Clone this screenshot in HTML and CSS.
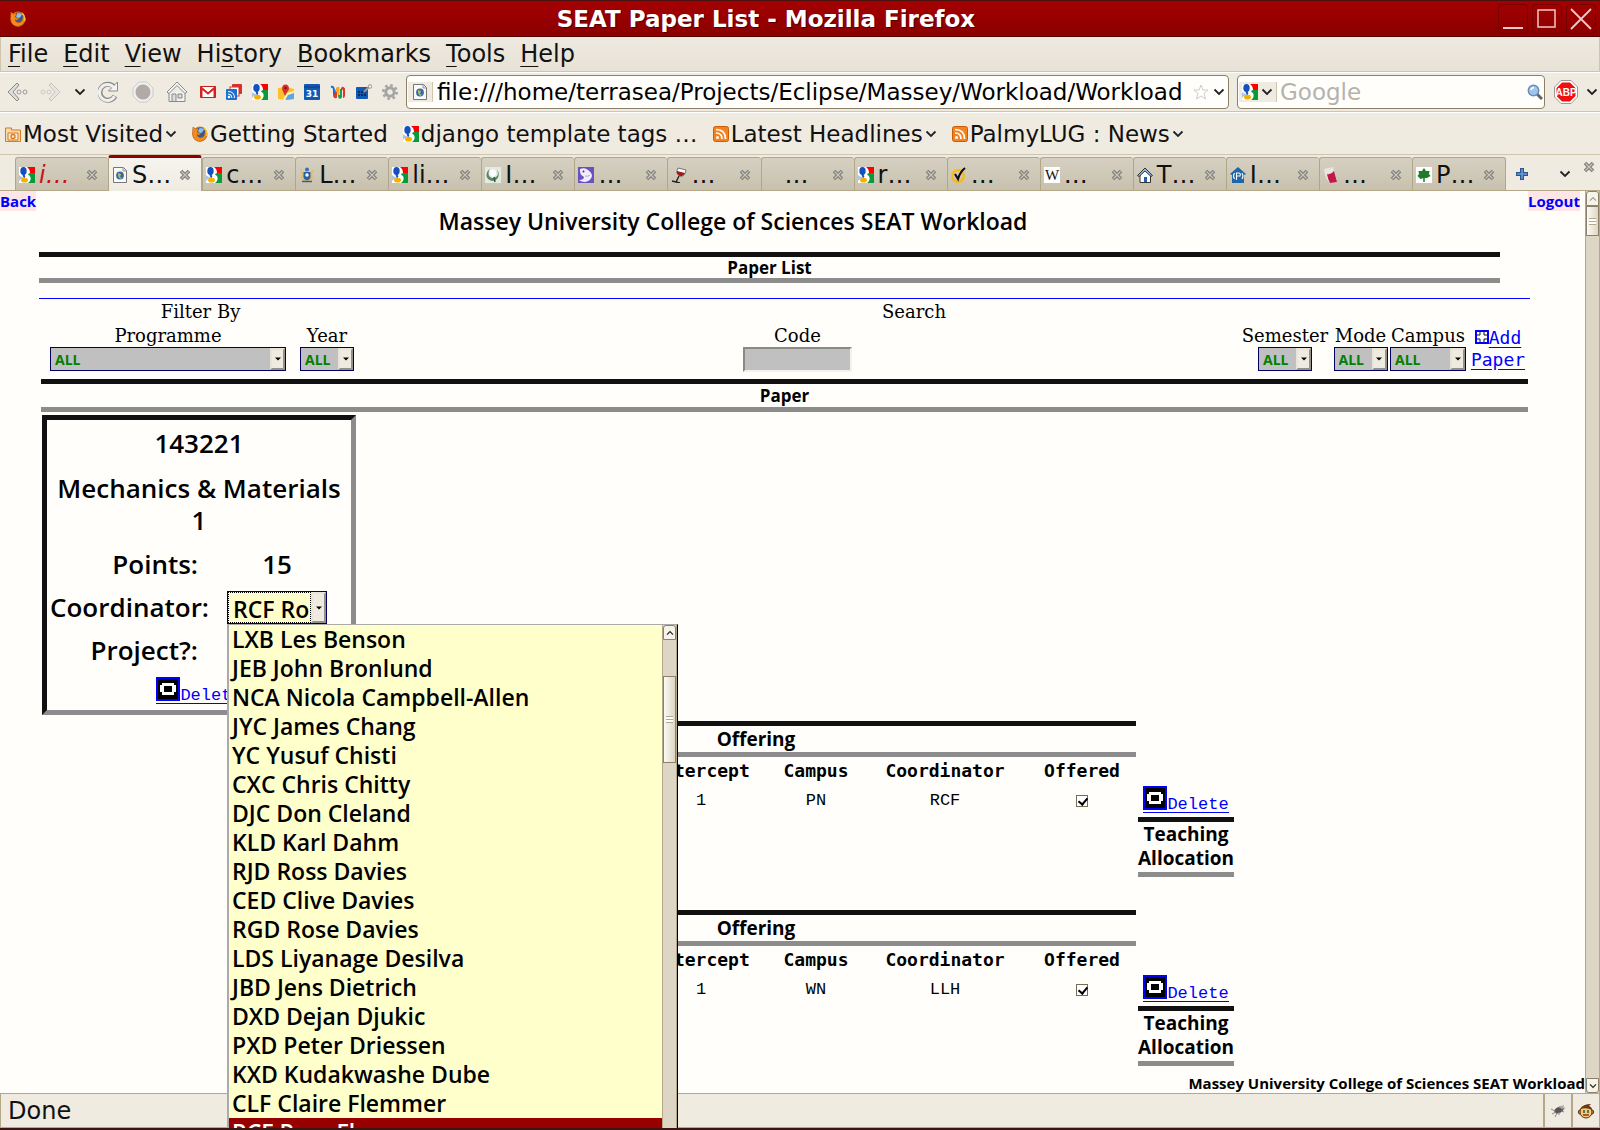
FILE: index.html
```html
<!DOCTYPE html>
<html lang="en">
<head>
<meta charset="utf-8">
<title>SEAT Paper List - Mozilla Firefox</title>
<link rel="stylesheet" href="styles.css">
</head>
<body>
<svg class="defs" aria-hidden="true">
  <symbol id="firefox" viewBox="0 0 16 16">
    <circle cx="8" cy="8" r="7.500" fill="#e8761a"/>
    <circle cx="8.500" cy="6.500" r="5" fill="#2c5a9c"/><path d="M7 2.500q3-1.500 5 1l-2 3-2 1-2-2z" fill="#8cc0ea"/>
    <path d="M1 1l2.500 2q2-1 3 .5L5 6l2 1 2 .5q-2 3-4 1 1 4 5 3 3-1 3-7 2.500 3 1.500 6Q13 15 8 15.500 1 15 .5 8 .5 4 1 1z" fill="#f28c1c" stroke="#a84a10" stroke-width=".5"/>
    <path d="M12 2q3.500 3 2.500 8" fill="none" stroke="#f9c22b" stroke-width="1.600"/>
  </symbol>
  <symbol id="google" viewBox="0 0 16 16">
    <path d="M0 0h16v16H0z" fill="#fff"/><path d="M8 0h8v6H11q0-4-3-6z" fill="#f00"/><path d="M11 6h5v10H9q4-3 2-7-2-1-2-2z" fill="#0a9a3c"/>
    <ellipse cx="4.500" cy="4" rx="3.200" ry="4" fill="#1450c0"/><path d="M0 8q3 3 6 2v1q-4 0-6 3z" fill="#1450c0" opacity=".35"/><path d="M5 7q-1 2 1 3" stroke="#1450c0" stroke-width="2" fill="none"/><ellipse cx="5.500" cy="13.200" rx="3.400" ry="2.400" fill="#f5b000"/>
  </symbol>
  <symbol id="page" viewBox="0 0 16 16">
    <path d="M1.500.5h10l3 3v12h-13z" fill="#fafafa" stroke="#777"/><path d="M11 .5V4h3" fill="#ddd" stroke="#999"/>
    <circle cx="8" cy="8.500" r="3.900" fill="#3a67a8"/><path d="M6 6l3 1-1 3 2 1-2 1-2-3z" fill="#a8c060"/>
  </symbol>
  <symbol id="chev" viewBox="0 0 12 8"><path d="M1.500 1.500L6 6l4.500-4.500" fill="none" stroke="#222" stroke-width="1.800"/></symbol>
  <symbol id="down" viewBox="0 0 6 4"><path d="M0 .5h6L3 3.500z" fill="#000"/></symbol>
  <symbol id="close" viewBox="0 0 12 12"><path d="M2 2l8 8M10 2l-8 8" stroke="#7c7c76" stroke-width="3.600"/><path d="M2.500 2.500l7 7M9.500 2.500l-7 7" stroke="#c8c6bc" stroke-width="1.300"/></symbol>
  <symbol id="rss" viewBox="0 0 16 16"><rect x=".5" y=".5" width="15" height="15" rx="2" fill="#f58220" stroke="#c95e0a"/><circle cx="4.500" cy="11.500" r="1.500" fill="#fff"/><path d="M3 7q6 0 6 6M3 3.500q9.500 0 9.500 9.500" fill="none" stroke="#fff" stroke-width="1.700"/></symbol>
  <symbol id="del" viewBox="0 0 24 24"><path d="M0 0h24v24H0z" fill="#00f"/><path d="M2 2h20v20H2z" fill="#000"/><path d="M6 6h12v2h2v7h-2v3H6v-3H4V8h2z" fill="#fff"/><path d="M8 9h8v6H8z" fill="#000"/></symbol>
</svg>

<header class="titlebar">
  <svg class="ico"><use href="#firefox"/></svg>
  <h1 class="window-title">SEAT Paper List - Mozilla Firefox</h1>
  <div class="window-buttons">
    <button aria-label="Minimise"><svg viewBox="0 0 20 20"><path d="M0 19h20" stroke="#f0c8c8" stroke-width="2"/></svg></button>
    <button aria-label="Maximise"><svg viewBox="0 0 20 20"><path d="M1 1h17v17H1z" fill="none" stroke="#f0c8c8" stroke-width="1.500"/></svg></button>
    <button aria-label="Close"><svg viewBox="0 0 20 20"><path d="M0 0l20 20M20 0L0 20" stroke="#f0c8c8" stroke-width="1.800"/></svg></button>
  </div>
</header>

<nav class="menubar">
  <button><u>F</u>ile</button><button><u>E</u>dit</button><button><u>V</u>iew</button><button>Hi<u>s</u>tory</button><button><u>B</u>ookmarks</button><button><u>T</u>ools</button><button><u>H</u>elp</button>
</nav>

<div class="navbar">
  <button class="nb" aria-label="Back"><svg viewBox="0 0 22 22"><path d="M11 2L2 11l9 9 2-2-6-7 6-7z" fill="#ddd" stroke="#888"/><circle cx="13" cy="11" r="2" fill="#eee" stroke="#999"/><circle cx="19" cy="11" r="2" fill="#eee" stroke="#999"/></svg></button>
  <button class="nb faint" aria-label="Forward"><svg viewBox="0 0 22 22"><path d="M11 2l9 9-9 9-2-2 6-7-6-7z" fill="#ddd" stroke="#888"/><circle cx="9" cy="11" r="2" fill="#eee" stroke="#999"/><circle cx="3" cy="11" r="2" fill="#eee" stroke="#999"/></svg></button>
  <button class="nb slim" aria-label="History list"><svg class="chev"><use href="#chev"/></svg></button>
  <button class="nb" aria-label="Reload"><svg viewBox="0 0 22 22"><path d="M17 15a8 8 0 1 1-1-9" fill="none" stroke="#8a8a88" stroke-width="5"/><path d="M19.500 1v9h-9z" fill="#f4f4f2" stroke="#8a8a88"/><path d="M16.500 15.300a8 8 0 1 1-1-9" fill="none" stroke="#f0f0ee" stroke-width="3"/></svg></button>
  <button class="nb" aria-label="Stop"><svg viewBox="0 0 22 22"><path d="M7 1h8l6 6v8l-6 6H7l-6-6V7z" fill="#eee" stroke="#ccc"/><circle cx="11" cy="11" r="7.500" fill="#b3aaa8"/></svg></button>
  <button class="nb" aria-label="Home"><svg viewBox="0 0 22 22"><path d="M3 11v9.500h16V11" fill="#f2f2f0" stroke="#888"/><path d="M11 1L1 11l2 1.500 8-8 8 8 2-1.500z" fill="#f4f4f2" stroke="#888"/><path d="M6 20v-7h4v7M12 13h4v4h-4z" fill="#ddd" stroke="#888"/></svg></button>
  <div class="favs">
    <a href="#gmail" aria-label="Mail"><svg viewBox="0 0 16 16"><path d="M.5 2.500h15v11H.5z" fill="#fff" stroke="#c8201c"/><path d="M1.500 13.500V4L8 9.500 14.500 4v9.500" fill="none" stroke="#d8251f" stroke-width="2"/></svg></a>
    <a href="#reader" aria-label="Reader"><svg viewBox="0 0 16 16"><rect x="6" y="0" width="10" height="10" rx="1" fill="#d8302a"/><rect x="4" y="3" width="9" height="9" fill="#fff" stroke="#d8302a"/><rect x="0" y="5" width="11" height="11" rx="1" fill="#1d6fd0"/><circle cx="3" cy="13" r="1.300" fill="#fff"/><path d="M2 10q4 0 4 4M2 7.500q6.500 0 6.500 6.500" stroke="#fff" fill="none"/></svg></a>
    <a href="#google" aria-label="Search"><svg><use href="#google"/></svg></a>
    <a href="#maps" aria-label="Maps"><svg viewBox="0 0 16 16"><path d="M0 4l8-1 8 2v10l-8 1-8-1z" fill="#fbc02d"/><path d="M7 10l9-2v7l-8 1z" fill="#5aa5ea"/><path d="M5 16l3-7 8-2v2l-6 2-3 5z" fill="#fff3b0"/><path d="M7 12L4 5q0-4.500 3.500-4.500T11 5z" fill="#d8302a"/><circle cx="7.500" cy="4" r="1.200" fill="#701010"/></svg></a>
    <a href="#calendar" aria-label="Calendar"><svg viewBox="0 0 16 16"><rect width="16" height="16" rx="1" fill="#1259b5"/><path d="M0 3h16" stroke="#0b3d84"/><text x="8" y="13" class="cal">31</text></svg></a>
    <a href="#wave" aria-label="Wave"><svg viewBox="0 0 16 16"><g fill="none" stroke-width="2"><path d="M1 3q3-1 3 4v4" stroke="#1f6ad0"/><path d="M4 10q0 4 2 3V6" stroke="#e0342c"/><path d="M6.500 8q0-5 2-4v7" stroke="#f6a81c"/><path d="M9 11q0 4 2 2V5" stroke="#16a050"/><path d="M11.500 6q1-4 2.500-1v6q0 2-1 2" stroke="#e0342c"/></g></svg></a>
    <a href="#tasks" aria-label="Tasks"><svg viewBox="0 0 16 16"><rect x="0" y="3" width="12" height="12" rx="1" fill="#1259b5"/><path d="M2 8h2m1 0h2m1 0h2M2 11h2m1 0h2m1 0h2" stroke="#052c66" stroke-width="2"/><path d="M8 8l5-5" stroke="#999" stroke-width="2"/><circle cx="14" cy="2.500" r="1.800" fill="#eee" stroke="#777" stroke-width=".7"/></svg></a>
    <a href="#gear" aria-label="Settings"><svg viewBox="0 0 16 16"><circle cx="8" cy="8" r="6.700" fill="none" stroke="#a4a4a4" stroke-width="2.600" stroke-dasharray="2.600 2.660"/><circle cx="8" cy="8" r="4.200" fill="none" stroke="#a4a4a4" stroke-width="3"/></svg></a>
  </div>
  <div class="field url">
    <span class="id"><svg class="ico"><use href="#page"/></svg></span>
    <input type="text" aria-label="Location" value="file:///home/terrasea/Projects/Eclipse/Massey/Workload/Workload">
    <svg class="ico" viewBox="0 0 16 16"><path d="M8 1l2 5h5l-4 3.500 1.500 5.500L8 12l-4.500 3L5 9.500 1 6h5z" fill="#fff" stroke="#ccc"/></svg>
    <svg class="chev"><use href="#chev"/></svg>
  </div>
  <div class="field find">
    <span class="id engine"><svg class="ico"><use href="#google"/></svg><svg class="chev"><use href="#chev"/></svg></span>
    <input type="text" aria-label="Search the web" placeholder="Google">
    <svg class="ico" viewBox="0 0 16 16"><path d="M10 10l5 5" stroke="#666" stroke-width="3"/><circle cx="6.500" cy="6.500" r="5.200" fill="#9cc6f0" stroke="#6c8cb0" stroke-width="1.500"/><path d="M4 6q0-2 3-2.500" stroke="#fff" stroke-width="1.500" fill="none"/></svg>
  </div>
  <button class="abp" aria-label="Adblock"><svg viewBox="0 0 24 24"><path d="M7 .5h10L23.500 7v10L17 23.500H7L.5 17V7z" fill="#fff" stroke="#999"/><path d="M8 2.500h8L21.500 8v8L16 21.500H8L2.500 16V8z" fill="#f01010"/><text x="12" y="16" class="abp-text">ABP</text></svg></button>
  <svg class="chev"><use href="#chev"/></svg>
</div>

<div class="bookmarks">
  <a href="#most"><svg class="ico" viewBox="0 0 16 16"><path d="M.5 2h6v2h9v11.500H.5z" fill="#f7d9b4" stroke="#d67a1c"/><path d="M3 7h10v7H3z" fill="#fbe9d0" stroke="#d67a1c"/><circle cx="8" cy="10.500" r="2" fill="none" stroke="#d67a1c" stroke-width="1.300"/></svg>Most Visited<svg class="chev small"><use href="#chev"/></svg></a>
  <a href="#started"><svg class="ico"><use href="#firefox"/></svg>Getting Started</a>
  <a href="#django"><svg class="ico"><use href="#google"/></svg>django template tags …</a>
  <a href="#headlines"><svg class="ico"><use href="#rss"/></svg>Latest Headlines<svg class="chev small"><use href="#chev"/></svg></a>
  <a href="#palmy"><svg class="ico"><use href="#rss"/></svg>PalmyLUG : News<svg class="chev small"><use href="#chev"/></svg></a>
</div>

<div class="tabs">
  <div class="tab unread"><svg class="ico"><use href="#google"/></svg><button class="label">i…</button><button class="x" aria-label="Close tab"><svg><use href="#close"/></svg></button></div>
  <div class="tab active"><svg class="ico"><use href="#page"/></svg><button class="label">S…</button><button class="x" aria-label="Close tab"><svg><use href="#close"/></svg></button></div>
  <div class="tab"><svg class="ico"><use href="#google"/></svg><button class="label">c…</button><button class="x" aria-label="Close tab"><svg><use href="#close"/></svg></button></div>
  <div class="tab"><svg class="ico" viewBox="0 0 16 16"><path d="M1 2q3 6 1 9 3 4 6 4t6-4q-2-3 1-9-3 1-3 5H4Q4 3 1 2z" fill="#e8b860"/><circle cx="8" cy="2.500" r="2" fill="#3a70b0"/><path d="M4.500 5h7v5q0 2-3.500 3.500Q4.500 12 4.500 10z" fill="#2a62a8"/><circle cx="8" cy="8" r="1.700" fill="#fff"/><path d="M3 14.500h10" stroke="#2a62a8" stroke-width="1.500"/></svg><button class="label">L…</button><button class="x" aria-label="Close tab"><svg><use href="#close"/></svg></button></div>
  <div class="tab"><svg class="ico"><use href="#google"/></svg><button class="label">li…</button><button class="x" aria-label="Close tab"><svg><use href="#close"/></svg></button></div>
  <div class="tab"><svg class="ico" viewBox="0 0 16 16"><path d="M0 0h16v16H0z" fill="#e4ebe0"/><path d="M5 1.500Q-1 7 3 12q5 4 9 0 4-5-1-10.500Q15 7 11 10q-3 2-6 0-3-3 0-8.500z" fill="#5f8567"/><path d="M5 3q-2 5 3 7 5-2 2-7-2-1-5 0z" fill="#fff"/><path d="M9 10l1 5" stroke="#345a40" stroke-width="1.500"/></svg><button class="label">I…</button><button class="x" aria-label="Close tab"><svg><use href="#close"/></svg></button></div>
  <div class="tab"><svg class="ico" viewBox="0 0 16 16"><path d="M0 0h16v16H0z" fill="#6a50c0"/><path d="M2 2q5-2 8 1 4 3 4 6-1 5-7 6-4 0-6-2 5 0 5-3-5-3-4-8z" fill="#f0edff"/><circle cx="5.500" cy="4.500" r="1" fill="#432a90"/><path d="M7 9q3 1 5-1" stroke="#b0a0e8" fill="none"/></svg><button class="label">…</button><button class="x" aria-label="Close tab"><svg><use href="#close"/></svg></button></div>
  <div class="tab"><svg class="ico" viewBox="0 0 16 16"><path d="M7 1l8 2q-1 7-6 6Q4 7 7 1z" fill="#fff" stroke="#444" stroke-width=".7"/><path d="M6 4l8 2q-2 4-5 3-4-2-3-5z" fill="#a01818"/><path d="M8 9l-3 6M1 14l8 2" stroke="#222" stroke-width="1.400"/></svg><button class="label">…</button><button class="x" aria-label="Close tab"><svg><use href="#close"/></svg></button></div>
  <div class="tab"><span class="ico"></span><button class="label">…</button><button class="x" aria-label="Close tab"><svg><use href="#close"/></svg></button></div>
  <div class="tab"><svg class="ico"><use href="#google"/></svg><button class="label">r…</button><button class="x" aria-label="Close tab"><svg><use href="#close"/></svg></button></div>
  <div class="tab"><svg class="ico" viewBox="0 0 16 16"><circle cx="7" cy="9" r="5.800" fill="none" stroke="#fdb813" stroke-width="2.200"/><path d="M4 7l3 5q2-7 7-11" fill="none" stroke="#111" stroke-width="2.200"/></svg><button class="label">…</button><button class="x" aria-label="Close tab"><svg><use href="#close"/></svg></button></div>
  <div class="tab"><svg class="ico" viewBox="0 0 16 16"><path d="M0 0h16v16H0z" fill="#fff"/><text x="8" y="13" class="wiki">W</text></svg><button class="label">…</button><button class="x" aria-label="Close tab"><svg><use href="#close"/></svg></button></div>
  <div class="tab"><svg class="ico" viewBox="0 0 16 16"><path d="M3 8v7.500h10.500V8L8 3z" fill="#fff" stroke="#333"/><path d="M8 1L.5 8.500 2 9.500 8 4l6 5.500 1.500-1z" fill="#8cb8e8" stroke="#222" stroke-width=".9"/><path d="M7 10h3v5H7z" fill="#2860b0"/></svg><button class="label">T…</button><button class="x" aria-label="Close tab"><svg><use href="#close"/></svg></button></div>
  <div class="tab"><svg class="ico" viewBox="0 0 16 16"><path d="M8 0l8 7-2 1v8H2V8L0 7z" fill="#1f66a8"/><path d="M6.500 13V6H9q2 .5 1 3H7M4.500 6q-2 3 0 6M12 6q2 3 0 6" fill="none" stroke="#fff" stroke-width="1.100"/></svg><button class="label">I…</button><button class="x" aria-label="Close tab"><svg><use href="#close"/></svg></button></div>
  <div class="tab"><svg class="ico" viewBox="0 0 16 16"><path d="M1 2l9-2 4 15-7 1Q2 12 1 2z" fill="#e8e4e0"/><path d="M4 7q4 1 7-3l3 11-7 1q-2-3-3-9z" fill="#c01848"/></svg><button class="label">…</button><button class="x" aria-label="Close tab"><svg><use href="#close"/></svg></button></div>
  <div class="tab"><svg class="ico" viewBox="0 0 16 16"><path d="M0 0h16v16H0z" fill="#fff"/><path d="M8 1l2 3h3.500L13 7l1.500 2-3.500 2H8l-3.500 1L1.500 9 3 7l-.5-3H6z" fill="#1f7a2c"/><path d="M8 9v6" stroke="#1f7a2c" stroke-width="1.500"/></svg><button class="label">P…</button><button class="x" aria-label="Close tab"><svg><use href="#close"/></svg></button></div>
  <div class="tab-tools">
    <button aria-label="New tab"><svg class="plus" viewBox="0 0 12 12"><path d="M6 0v12M0 6h12" stroke="#2c5594" stroke-width="4"/><path d="M6 1v10M1 6h10" stroke="#6f9bd6" stroke-width="1.600"/></svg></button>
    <button aria-label="All tabs"><svg class="chev"><use href="#chev"/></svg></button>
    <button class="shut" aria-label="Close"><svg class="plus"><use href="#close"/></svg></button>
  </div>
</div>

<div class="viewport">
  <main class="page">
    <div class="toplinks"><a href="#back">Back</a><a href="#logout">Logout</a></div>
    <h2 class="page-title">Massey University College of Sciences SEAT Workload</h2>
    <div class="body">
      <h3 class="band first">Paper List</h3>
      <form class="filters">
        <fieldset class="group">
          <legend>Filter By</legend>
          <div class="row">
            <label class="prog">Programme<span class="select"><select><option>ALL</option></select><span class="drop"><svg><use href="#down"/></svg></span></span></label>
            <label class="year">Year<span class="select"><select><option>ALL</option></select><span class="drop"><svg><use href="#down"/></svg></span></span></label>
          </div>
        </fieldset>
        <fieldset class="group search">
          <legend>Search</legend>
          <div class="row">
            <label class="code">Code<input type="text"></label>
            <label class="sem">Semester<span class="select"><select><option>ALL</option></select><span class="drop"><svg><use href="#down"/></svg></span></span></label>
            <label class="mode">Mode<span class="select"><select><option>ALL</option></select><span class="drop"><svg><use href="#down"/></svg></span></span></label>
            <label class="campus">Campus<span class="select"><select><option>ALL</option></select><span class="drop"><svg><use href="#down"/></svg></span></span></label>
          </div>
        </fieldset>
        <a class="add" href="#add"><svg viewBox="0 0 14 14"><path d="M0 0h14v14H0z" fill="#00f"/><path d="M2 2h10v10H2z" fill="#fff"/><path d="M5 2v3H2M9 2v3h3M5 12V9H2M9 12V9h3" fill="none" stroke="#111"/></svg>Add Paper</a>
      </form>
      <h3 class="band">Paper</h3>

      <section class="card">
        <p class="num">143221</p>
        <p class="name">Mechanics &amp; Materials 1</p>
        <div class="pair"><span>Points:</span><span class="val">15</span></div>
        <div class="pair coord"><label for="coordinator">Coordinator:</label>
          <div class="select open">
            <select id="coordinator"><option>RCF Rory Flemmer</option></select><span class="drop"><svg><use href="#down"/></svg></span>
            <div class="popup">
              <ul role="listbox" aria-label="Coordinator">
                <li role="option">LXB Les Benson</li><li role="option">JEB John Bronlund</li><li role="option">NCA Nicola Campbell-Allen</li><li role="option">JYC James Chang</li><li role="option">YC Yusuf Chisti</li><li role="option">CXC Chris Chitty</li><li role="option">DJC Don Cleland</li><li role="option">KLD Karl Dahm</li><li role="option">RJD Ross Davies</li><li role="option">CED Clive Davies</li><li role="option">RGD Rose Davies</li><li role="option">LDS Liyanage Desilva</li><li role="option">JBD Jens Dietrich</li><li role="option">DXD Dejan Djukic</li><li role="option">PXD Peter Driessen</li><li role="option">KXD Kudakwashe Dube</li><li role="option">CLF Claire Flemmer</li><li role="option" aria-selected="true">RCF Rory Flemmer</li>
              </ul>
              <div class="scroll"><span class="sb-btn"><svg class="up"><use href="#chev"/></svg></span><span class="sb-thumb"><i></i></span></div>
            </div>
          </div>
        </div>
        <div class="pair"><span>Project?:</span></div>
        <a class="del" href="#delete"><svg><use href="#del"/></svg>Delete</a>
      </section>

      <section class="offer">
        <table>
          <caption class="band">Offering</caption>
          <colgroup><col class="c0"><col class="c1"><col class="c2"><col class="c3"><col class="c4"></colgroup>
          <thead><tr><td></td><th>Intercept</th><th>Campus</th><th>Coordinator</th><th>Offered</th></tr></thead>
          <tbody><tr><td></td><td>1</td><td>PN</td><td>RCF</td><td><input type="checkbox" aria-label="Offered" checked></td></tr></tbody>
        </table>
        <div class="teach"><a class="del" href="#delete"><svg><use href="#del"/></svg>Delete</a><h3 class="band">Teaching Allocation</h3></div>
      </section>
      <section class="offer">
        <table>
          <caption class="band">Offering</caption>
          <colgroup><col class="c0"><col class="c1"><col class="c2"><col class="c3"><col class="c4"></colgroup>
          <thead><tr><td></td><th>Intercept</th><th>Campus</th><th>Coordinator</th><th>Offered</th></tr></thead>
          <tbody><tr><td></td><td>1</td><td>WN</td><td>LLH</td><td><input type="checkbox" aria-label="Offered" checked></td></tr></tbody>
        </table>
        <div class="teach"><a class="del" href="#delete"><svg><use href="#del"/></svg>Delete</a><h3 class="band">Teaching Allocation</h3></div>
      </section>
    </div>
    <footer class="foot">Massey University College of Sciences SEAT Workload</footer>
  </main>
  <div class="scroll main-scroll"><span class="sb-btn"><svg class="up dim"><use href="#chev"/></svg></span><span class="sb-thumb"><i></i></span><span class="sb-btn end"><svg><use href="#chev"/></svg></span></div>
</div>

<div class="status">
  <span class="msg">Done</span>
  <span class="cell"><svg class="ico" viewBox="0 0 16 16"><ellipse cx="9" cy="7" rx="5" ry="3" fill="#555" transform="rotate(-25 9 7)"/><path d="M1 6l4 2M2 11l4-2M5 14l2-4M14 9l-3-1M15 5l-4 1M9 12l0-3" stroke="#888"/><path d="M8 4l6-2-1 4z" fill="#aaa"/></svg></span>
  <span class="cell"><svg class="ico" viewBox="0 0 16 16"><circle cx="2.500" cy="9" r="2.200" fill="#e0a050" stroke="#5a3010"/><circle cx="13.500" cy="9" r="2.200" fill="#e0a050" stroke="#5a3010"/><circle cx="8" cy="9" r="6" fill="#f6c878" stroke="#5a3010"/><path d="M2 6q3-5 11-5l-2 2q3 1 3 4-5-3-12-1z" fill="#6a3a14"/><path d="M6 7v3M10 7v3" stroke="#206040" stroke-width="1.500"/><path d="M5 12h6" stroke="#8a1a10" stroke-width="1.300"/></svg></span>
</div>
</body>
</html>
```
FILE: styles.css
```css
* { box-sizing: border-box; }
body {
  margin: 0; height: 100vh; overflow: hidden; display: flex; flex-direction: column;
  background: #efebe1; color: #111; font: 24px/28px "DejaVu Sans", sans-serif;
  border-bottom: 2px solid #3c1414;
}
.defs { display: none; }
button { font: inherit; color: inherit; background: none; border: 0; padding: 0; margin: 0; }
a { color: inherit; text-decoration: none; }
svg { display: block; flex: none; }
h1, h2, h3, p, ul { margin: 0; padding: 0; font-weight: inherit; list-style: none; }
.ico { width: 16px; height: 16px; flex: none; }
.chev { width: 12px; height: 8px; }

.titlebar {
  display: flex; align-items: center; height: 37px; flex: none; padding: 0 4px 0 10px;
  border-top: 1px solid #4a1010; border-bottom: 1px solid #500;
  background: linear-gradient(#a40000, #8c0000); color: #fff;
}
.window-title { flex: 1; text-align: center; font-size: 23px; font-weight: bold; padding-left: 8px; text-shadow: 1px 1px 0 #500; }
.window-buttons { display: flex; gap: 4px; }
.window-buttons button { width: 30px; height: 30px; border: 1px solid #700; border-radius: 4px; display: grid; place-items: center; }
.window-buttons svg { width: 20px; height: 20px; overflow: visible; }

.menubar {
  display: flex; gap: 15px; height: 35px; flex: none; padding: 0 7px; align-items: center;
  background: linear-gradient(#eeeae0, #e8e2d6); border: 1px solid #cfc4ac; border-top: 0;
}
.menubar button { height: 32px; }
.menubar u { text-decoration-thickness: 1px; text-underline-offset: 4px; }

.navbar { display: flex; align-items: center; height: 40px; flex: none; padding: 0 2px 0 6px; border-bottom: 1px solid #cfc4ac; border-top: 1px solid #fff; }
.nb { width: 22px; margin-right: 12px; }
.nb svg { width: 22px; height: 22px; }
.nb svg.chev { width: 12px; height: 8px; }
.nb.slim { width: 12px; }
.faint { opacity: .4; }
.favs { display: flex; gap: 10px; margin-right: 8px; }
.favs svg { width: 16px; height: 16px; }
.cal { font: bold 9px "DejaVu Sans", sans-serif; fill: #fff; text-anchor: middle; }
.wiki { font: 15px "Liberation Serif", serif; fill: #111; text-anchor: middle; }
.field {
  display: flex; align-items: center; height: 34px; background: #fffefb;
  border: 1px solid #8c8068; border-radius: 4px; padding-right: 3px;
}
.field input { flex: 1; min-width: 0; border: 0; padding: 0; background: none; font: inherit; font-size: 23px; color: #000; outline: 0; }
.field input::placeholder { color: #b4b2ac; opacity: 1; }
.id { display: flex; align-items: center; gap: 3px; height: 20px; padding: 0 4px; margin: 0 4px 0 1px; background: #efebe1; border-right: 1px solid #cfc4ac; }
.url { flex: 1; margin-right: 8px; }
.url > .ico { margin: 0 4px; }
.find { width: 308px; margin-right: 9px; padding-right: 1px; }
.engine { padding: 0 3px; margin-right: 3px; }
.abp { margin-right: 8px; }
.abp svg { width: 24px; height: 24px; }
.abp-text { font: bold 10px "Liberation Sans", sans-serif; fill: #fff; text-anchor: middle; }

.bookmarks { display: flex; align-items: center; gap: 15px; height: 43px; flex: none; padding-left: 5px; border-bottom: 1px solid #cfc4ac; border-top: 1px solid #fff; font-size: 23px; }
.bookmarks a { display: flex; align-items: center; gap: 2px; white-space: nowrap; }

.tabs { display: flex; align-items: flex-end; height: 36px; flex: none; padding-left: 15px; border-bottom: 1px solid #b4a888; }
.tab {
  flex: 1; min-width: 0; display: flex; align-items: center; height: 33px; padding: 2px 10px 0 3px;
  background: linear-gradient(#d6d0c2, #c8c1ae); border: 1px solid #b0a688; border-width: 1px 0 0 1px; border-radius: 3px 3px 0 0;
}
.tab:nth-child(16) { border-right-width: 1px; }
.tab.active { height: 36px; margin-bottom: -1px; background: linear-gradient(#f6f4ee, #efebe1); border-top: 3px solid #900000; border-right-width: 1px; padding-bottom: 2px; }
.label { flex: 1; text-align: left; padding-left: 4px; min-width: 0; white-space: nowrap; overflow: hidden; }
.unread .label { color: #c81414; font-style: italic; }
.x svg, .plus { width: 12px; height: 12px; }
.tab-tools { display: flex; width: 94px; height: 33px; padding: 0 5px 0 10px; align-items: center; justify-content: space-between; }
.tab-tools .shut { margin: 0 0 14px -18px; }

.viewport { flex: 1; min-height: 0; display: flex; background: #fffefb; color: #000; }
.page { flex: 1; min-width: 0; display: flex; flex-direction: column; font: 600 24px/29px "Open Sans", sans-serif; }
.toplinks { display: flex; justify-content: space-between; padding-right: 5px; font-size: 15px; font-weight: 700; line-height: 20px; }
.toplinks a { color: #00f; background: #ffe6e6; }
.page-title { font-size: 23px; line-height: 20px; text-align: center; margin: 0 119px 21px 0; }
.body { padding: 0 55px 0 39px; }
.band { border-top: 5px solid #111; border-bottom: 5px solid #8c8c8c; text-align: center; font-size: 17px; font-weight: 700; line-height: 23px; margin: 0 2px; }
.band.first { line-height: 21px; margin: 0 30px 15px 0; }

.filters { display: flex; align-items: flex-start; border-top: 1px solid #00f; height: 81px; font: 18px/24px "DejaVu Serif", serif; }
.group { border: 0; margin: 0; padding: 0; min-width: 0; width: 323px; }
.group.search { flex: 1; }
.group legend { display: block; width: 100%; padding: 1px 0; text-align: center; }
.row { display: flex; }
.row label { display: flex; flex-direction: column; align-items: center; line-height: 22px; }
.prog { width: 236px; margin: 0 14px 0 11px; }
.year { width: 54px; }
.code { flex: 1; padding-right: 6px; }
.code input { width: 109px; height: 25px; background: #c0c0c0; border: 2px solid; border-color: #8a8a84 #f4f2ec #f4f2ec #8a8a84; padding: 0; }
.sem { width: 92px; }
.sem .select, .mode .select, .year .select { width: 54px; }
.mode { width: 59px; }
.campus { width: 76px; }
.select { position: relative; display: flex; width: 100%; height: 24px; border: 1px solid #000060; background: #c0c0c0; }
.select select { appearance: none; flex: 1; min-width: 0; border: 0; margin: 0; padding: 0 0 0 4px; border-radius: 0; background: none; color: #008000; font: 700 14px "Open Sans", sans-serif; outline: 0; }
.drop { width: 15px; background: #efebe1; border: 2px outset #e8e4da; display: grid; place-items: center; pointer-events: none; }
.drop svg { width: 6px; height: 4px; }
.add { width: 64px; padding-top: 28px; text-align: center; color: #00f; font: 18px/22px "DejaVu Sans Mono", monospace; text-decoration: underline; text-underline-offset: 3px; }
.add svg { display: inline; width: 14px; height: 14px; }

.card { width: 314px; height: 300px; margin: 3px 0 6px 3px; border: 5px solid; border-color: #111 #8c8c8c #8c8c8c #111; padding: 7px 3px 0; font-size: 26px; }
.num, .name { text-align: center; line-height: 32px; }
.num { margin-bottom: 13px; }
.name { padding: 0 4px; margin-bottom: 12px; }
.pair { display: grid; grid-template-columns: 164px 1fr; align-items: center; height: 32px; text-align: right; margin-bottom: 11px; }
.pair > :first-child { padding-right: 16px; }
.pair > .val { text-align: center; padding-right: 8px; }
.coord { height: 32px; }
.pair.coord > label { padding-right: 0; text-align: left; }
.select.open { width: 100px; height: 33px; margin-left: 13px; background: #ffffcc; text-align: left; }
.open select { color: #000; font: 600 23px "Open Sans", sans-serif; border: 1px dotted #000; }
.popup { position: absolute; z-index: 5; top: 32px; left: -1px; width: 451px; display: flex; background: #ffffcc; border: 1px solid #aaa; border-left: 2px solid #aaa; border-right: 1px solid #000; }
.popup ul { flex: 1; font-size: 23px; line-height: 29px; }
.popup li { padding-left: 3px; white-space: nowrap; }
.popup li[aria-selected] { background: #980000; color: #fff; }
.del { display: flex; align-items: flex-end; width: max-content; margin: 0 auto; color: #00f; font: 17px/14px "Liberation Mono", monospace; border-bottom: 1px solid #00f; }
.del svg { width: 24px; height: 24px; margin-bottom: 2px; }

.scroll { width: 15px; background: #ddd6c4; border-left: 1px solid #b4a888; border-right: 1px solid #b4a888; display: flex; flex-direction: column; }
.sb-btn { height: 15px; border: 1px solid #8c8068; border-radius: 3px 3px 0 0; background: #f6f3ea; display: grid; place-items: center; }
.sb-btn svg { width: 8px; height: 6px; }
.up { transform: rotate(180deg); }
.dim { opacity: .4; }
.sb-thumb { height: 87px; margin-top: 36px; border: 1px solid #8c8068; background: linear-gradient(90deg, #fbfaf6, #ddd6c4); display: grid; place-items: center; }
.sb-thumb i { width: 7px; height: 7px; border: solid #b4a888; border-width: 1px 0; background: linear-gradient(#fff 2px, #b4a888 2px, #b4a888 3px, #fff 3px); }
.main-scroll .sb-thumb { height: 30px; margin-top: 0; }
.end { margin-top: auto; border-radius: 0 0 3px 3px; }

.offer { display: flex; margin-left: 337px; align-items: flex-start; }
.offer + .offer { margin-top: 33px; }
.offer table { width: 760px; table-layout: fixed; border-collapse: collapse; font: 17px/28px "Liberation Mono", monospace; text-align: center; }
.offer .band { font-size: 19px; }
.offer caption { margin: 0; font-family: "Open Sans", sans-serif; line-height: 26px; }
.offer th { font: bold 18px/28px "DejaVu Sans Mono", monospace; padding: 0; }
.offer td { padding: 2px 0 0; }
.c0 { width: 256px; } .c1 { width: 138px; } .c2 { width: 92px; } .c3 { width: 166px; } .c4 { width: 108px; }
.offer input { appearance: none; width: 12px; height: 12px; margin: 0; border: 1px solid #776e58; background: #fff; vertical-align: middle; position: relative; }
.offer input:checked::after { content: ""; position: absolute; left: 3px; top: 0; width: 4px; height: 7px; border: solid #000; border-width: 0 2px 2px 0; transform: rotate(40deg); }
.teach { width: 96px; margin-left: 2px; padding-top: 65px; }
.teach .band { margin: 4px 0 0; line-height: 24px; padding-bottom: 2px; }
.foot { margin-top: auto; text-align: right; font-size: 15px; font-weight: 700; line-height: 20px; }

.status { display: flex; height: 35px; flex: none; border: 1px solid #b4a888; }
.msg { flex: 1; padding: 3px 7px; }
.cell { width: 28px; border-left: 2px solid #b4a888; display: grid; place-items: center; }
```
